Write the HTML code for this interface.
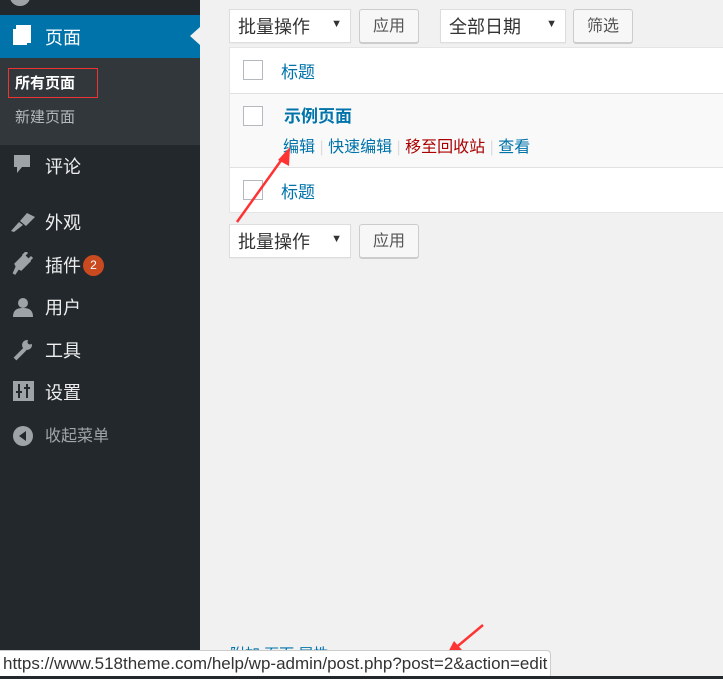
<!DOCTYPE html>
<html><head><meta charset="utf-8"><style>
*{margin:0;padding:0;box-sizing:border-box}
body{width:723px;height:679px;overflow:hidden;background:#f1f1f1;font-family:"Liberation Sans","Noto Sans CJK SC",sans-serif;position:relative}
.side{position:absolute;left:0;top:0;width:200px;height:679px;background:#23282d}
.abs{position:absolute}
.mi{position:absolute;left:45px;color:#eee;font-size:18px;line-height:22px}
.sel{position:absolute;background:#fff;border:1px solid #ddd;font-size:18px;line-height:22px;color:#333;padding:6px 8px 0;box-shadow:0 1px 1px rgba(0,0,0,.04)}
.sel:after{content:"▼";position:absolute;right:8px;top:8px;font-size:11px;line-height:12px}
.btn{position:absolute;background:#f7f7f7;border:1px solid #ccc;border-radius:3px;font-size:16px;color:#555;text-align:center;box-shadow:0 1px 0 #ccc;padding-top:7px;line-height:20px}
.cb{position:absolute;left:13px;width:20px;height:20px;border:1px solid #b4b9be;background:#fff}
.lnk{color:#0073aa}
</style></head><body>
<div class="side">
  <div class="abs" style="left:10px;top:-12px;width:20px;height:18px;border-radius:50%;background:#9ea3a8"></div>
  <div class="abs" style="left:0;top:15px;width:200px;height:43px;background:#0073aa"></div>
  <div class="abs" style="left:190px;top:27px;width:0;height:0;border-top:9px solid transparent;border-bottom:9px solid transparent;border-right:10px solid #f1f1f1"></div>
  <svg class="abs" style="left:12px;top:24px" width="22" height="22"><rect x="4" y="1" width="15" height="18" fill="#fff"/><rect x="1" y="5" width="3" height="16" fill="#fff"/><rect x="1" y="18" width="14" height="3" fill="#fff"/></svg>
  <div class="mi" style="top:27px;color:#fff">页面</div>
  <div class="abs" style="left:0;top:58px;width:200px;height:87px;background:#32373c"></div>
  <div class="abs" style="left:8px;top:68px;width:90px;height:30px;border:1px solid #e33"></div>
  <div class="abs" style="left:15px;top:74px;color:#fff;font-weight:bold;font-size:15px;line-height:20px">所有页面</div>
  <div class="abs" style="left:15px;top:108px;color:#b4b9be;font-size:15px;line-height:20px">新建页面</div>
  <svg class="abs" style="left:13px;top:154px" width="20" height="22"><path d="M1 1h16v12H9l-5 6v-6H1z" fill="#9ea3a8"/></svg>
  <div class="mi" style="top:156px">评论</div>
  <svg class="abs" style="left:10px;top:211px" width="26" height="22"><path d="M1 20l8-9 4 3-9 7zM10 10l7-8 8 4-9 9z" fill="#9ea3a8"/></svg>
  <div class="mi" style="top:212px">外观</div>
  <svg class="abs" style="left:12px;top:252px" width="22" height="24"><path d="M2 22l4-6-2-4 8-8 5 5-8 8-4-2zM11 4l4-4M16 9l4-4" stroke="#9ea3a8" stroke-width="3" fill="#9ea3a8"/></svg>
  <div class="mi" style="top:255px">插件</div>
  <div class="abs" style="left:83px;top:255px;width:21px;height:21px;border-radius:50%;background:#ca4a1f;color:#fff;font-size:12px;text-align:center;line-height:21px">2</div>
  <svg class="abs" style="left:12px;top:296px" width="22" height="22"><circle cx="11" cy="7" r="5" fill="#9ea3a8"/><path d="M1 21c0-7 4-9 10-9s10 2 10 9z" fill="#9ea3a8"/></svg>
  <div class="mi" style="top:297px">用户</div>
  <svg class="abs" style="left:12px;top:338px" width="22" height="24"><path d="M3 21l10-10" stroke="#9ea3a8" stroke-width="4"/><circle cx="15" cy="7" r="5" fill="#9ea3a8"/><circle cx="18" cy="4" r="2.5" fill="#23282d"/></svg>
  <div class="mi" style="top:340px">工具</div>
  <svg class="abs" style="left:13px;top:381px" width="21" height="21"><rect width="21" height="20" fill="#9ea3a8"/><path d="M6 3v14M14 3v14M3 11h6M11 7h6" stroke="#23282d" stroke-width="2"/></svg>
  <div class="mi" style="top:382px">设置</div>
  <svg class="abs" style="left:12px;top:425px" width="22" height="22"><circle cx="11" cy="11" r="10" fill="#9ea3a8"/><path d="M14 6v10l-7-5z" fill="#23282d"/></svg>
  <div class="mi" style="top:426px;font-size:16px;color:#a0a5aa">收起菜单</div>
</div>

<div class="sel" style="left:229px;top:9px;width:122px;height:34px">批量操作</div>
<div class="btn" style="left:359px;top:9px;width:60px;height:34px">应用</div>
<div class="sel" style="left:440px;top:9px;width:126px;height:34px">全部日期</div>
<div class="btn" style="left:573px;top:9px;width:60px;height:34px">筛选</div>

<div class="abs" style="left:229px;top:47px;width:500px;height:166px;background:#fff;border:1px solid #e5e5e5">
  <div class="cb" style="top:12px"></div>
  <div class="abs lnk" style="left:51px;top:14px;font-size:17px;line-height:22px">标题</div>
  <div class="abs" style="left:0;top:45px;width:100%;height:75px;background:#f9f9f9;border-top:1px solid #e1e1e1;border-bottom:1px solid #e1e1e1">
    <div class="cb" style="top:12px"></div>
    <div class="abs" style="left:54px;top:12px;font-size:17px;line-height:22px;font-weight:bold;color:#0073aa">示例页面</div>
    <div class="abs" style="left:53px;top:44px;font-size:16px;line-height:20px;white-space:nowrap"><span class="lnk">编辑</span> <span style="color:#ddd">|</span> <span class="lnk">快速编辑</span> <span style="color:#ddd">|</span> <span style="color:#a00">移至回收站</span> <span style="color:#ddd">|</span> <span class="lnk">查看</span></div>
  </div>
  <div class="cb" style="top:132px"></div>
  <div class="abs lnk" style="left:51px;top:134px;font-size:17px;line-height:22px">标题</div>
</div>

<div class="sel" style="left:229px;top:224px;width:122px;height:34px">批量操作</div>
<div class="btn" style="left:359px;top:224px;width:60px;height:34px">应用</div>

<svg class="abs" style="left:0;top:0" width="723" height="679">
  <path d="M237 222L285 155" stroke="#f33" stroke-width="2.5"/>
  <path d="M290 147L278 160L289 166z" fill="#f33"/>
  <path d="M483 625L453 650" stroke="#f33" stroke-width="2.5"/>
  <path d="M446 656L454 641L462 650z" fill="#f33"/>
</svg>
<div class="abs" style="left:230px;top:643px;font-size:15px;color:#0073aa">附加 页面 属性</div>
<div class="abs" style="left:0;top:650px;width:551px;height:27px;background:#fff;border:1px solid #ccc;border-left:none;border-radius:0 4px 0 0;font-size:17px;line-height:22px;color:#333;padding:2px 0 0 3px;white-space:nowrap;overflow:hidden">https://www.518theme.com/help/wp-admin/post.php?post=2&amp;action=edit</div>
<div class="abs" style="left:0;top:676px;width:723px;height:3px;background:#23282d"></div>
</body></html>
